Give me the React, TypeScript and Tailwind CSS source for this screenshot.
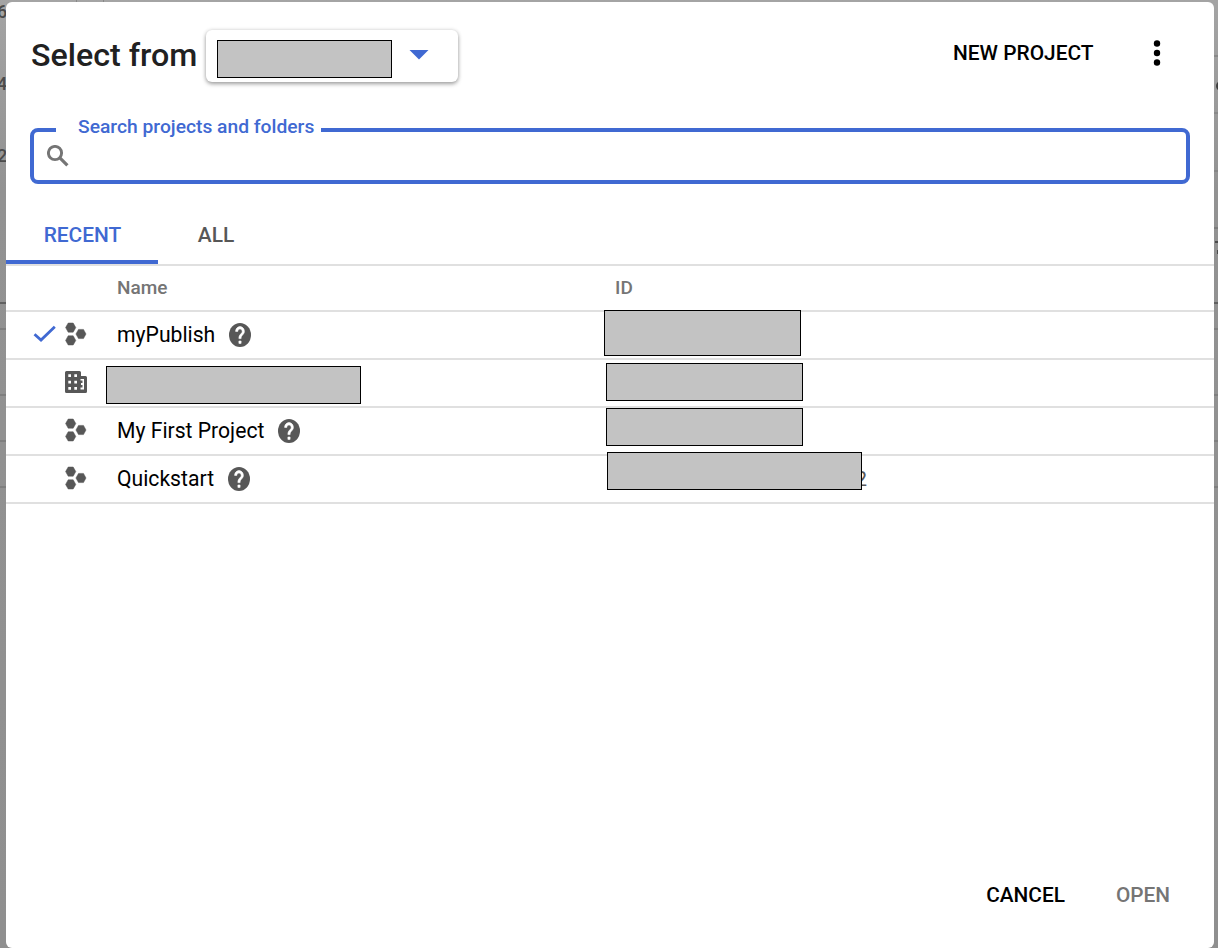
import React from "react";

function ProjectIcon() {
  return (
    <svg width="22" height="24" viewBox="0 0 22 24" fill="#575757" stroke="#575757" strokeWidth=".5" strokeLinejoin="round" className="block shrink-0">
      <path d="M3.200 1h5L10.800 5.600l-2.600 4.600h-5L.6 5.600z" />
      <path d="M13.500 7.400h5l2.500 4.600-2.500 4.600h-5L10.900 12z" />
      <path d="M3.200 13.800h5l2.600 4.600-2.600 4.600h-5L.6 18.400z" />
    </svg>
  );
}

function OrgIcon() {
  return (
    <svg width="22" height="22" viewBox="0 0 22 22" className="block shrink-0">
      <path
        fill="#575757"
        fillRule="evenodd"
        d="M1.500 0h13q1.500 0 1.500 1.500V5h4.500Q22 5 22 6.500v14q0 1.500-1.500 1.500h-19Q0 22 0 20.500v-19Q0 0 1.500 0zM3.300 3.300v2.700h2.700v-2.700zM9.300 3.300v2.700h2.700v-2.700zM3.300 9.700v2.700h2.700v-2.700zM9.300 9.700v2.700h2.700v-2.700zM3.300 16v2.700h2.700v-2.700zM9.300 16v2.700h2.700v-2.700zM15.500 8v1.500H17.500v2.500h-1.500v2H17.500v2.500h-2V18.500H19V8z"
      />
    </svg>
  );
}

function HelpIcon() {
  return (
    <svg width="22" height="24" viewBox="2 2 20 20" preserveAspectRatio="none" className="block shrink-0">
      <circle cx="12" cy="12" r="10" fill="#575757" />
      <path
        fill="#fff"
        stroke="#fff"
        strokeWidth=".5"
        d="M13 19h-2v-2h2v2zm2.070-7.750l-.9.920C13.450 12.900 13 13.500 13 15h-2v-.5c0-1.100.45-2.100 1.170-2.830l1.240-1.260c.37-.36.59-.86.59-1.410 0-1.100-.9-2-2-2s-2 .9-2 2H8c0-2.210 1.790-4 4-4s4 1.790 4 4c0 .88-.36 1.680-.93 2.250z"
      />
    </svg>
  );
}

function CheckIcon() {
  return (
    <svg width="24" height="18" viewBox="0 0 24 18" className="block shrink-0">
      <path d="M1.500 9.200L8 15 21.800 1.800" fill="none" stroke="#4069d2" strokeWidth="2.800" />
    </svg>
  );
}

type Row = {
  name?: string;
  kind: "project" | "org";
  selected?: boolean;
  mask: string;
  tail?: string;
};

const rows: Row[] = [
  { name: "myPublish", kind: "project", selected: true, mask: "-left-[11px] -top-[2px] h-[46px] w-[197px]" },
  { kind: "org", mask: "-left-[9px] top-[3px] h-[38px] w-[197px]" },
  { name: "My First Project", kind: "project", mask: "-left-[9px] top-0 h-[38px] w-[197px]" },
  { name: "Quickstart", kind: "project", mask: "-left-[8px] -top-[4px] h-[38px] w-[255px]", tail: "2" },
];

function ProjectRow({ row }: { row: Row }) {
  return (
    <div className="flex h-12 border-b-2 border-[#e0e0e0]">
      <div className="flex w-[59px] items-center pb-[2px] pl-[27px]">{row.selected && <CheckIcon />}</div>
      <div className="flex w-[52px] items-center pb-[2px]">
        {row.kind === "org" ? <OrgIcon /> : <ProjectIcon />}
      </div>
      <div className="relative flex w-[498px] items-center gap-[14px] text-[21.150px] leading-[30px] text-black">
        {row.name ? (
          <>
            <span>{row.name}</span>
            <HelpIcon />
          </>
        ) : (
          <span className="absolute -left-[11px] top-[6px] h-[38px] w-[255px] border border-black bg-[#c3c3c3]" />
        )}
      </div>
      <div className="relative flex w-[252px] items-center justify-end text-[21px] leading-[30px] text-[#575757]">
        {row.tail}
        <span className={"absolute z-10 border border-black bg-[#c3c3c3] " + row.mask} />
      </div>
    </div>
  );
}

function Backdrop() {
  return (
    <div className="absolute inset-0 overflow-hidden bg-linear-to-b from-[#a4a4a4] via-[#929292] via-20% to-[#8f8f8f] text-[18px] leading-5 font-medium text-[#4b4b4b]">
      <div className="absolute left-[76px] top-0 h-[2px] w-px bg-[#888888]" />
      <div className="absolute left-[103px] top-0 h-[2px] w-px bg-[#888888]" />
      <span className="absolute -left-[3px] top-[2px]">6</span>
      <span className="absolute -left-[3px] top-[74px]">4</span>
      <span className="absolute -left-[3px] top-[146px]">2</span>
      <div className="absolute left-[1214px] top-[55px] h-[2px] w-1 bg-[#898989]" />
      <div className="absolute left-[1214px] top-[112px] h-[2px] w-1 bg-[#898989]" />
      <div className="absolute left-[1214px] top-[170px] h-[2px] w-1 bg-[#858585]" />
      <div className="absolute left-[1214px] top-[227px] h-[2px] w-1 bg-[#7c7c7c]" />
      <div className="absolute left-[1216px] top-[81px] size-[10px] rounded-full bg-[#3e3e3e]" />
      <div className="absolute left-[1215px] top-[241px] h-[2px] w-[3px] bg-[#4b4b4b]" />
      <div className="absolute left-[1217px] top-[250px] h-[4px] w-px bg-[#4b4b4b]" />
      <div className="absolute inset-x-0 top-[302px] h-[2px] bg-[#606060]" />
      <div className="absolute inset-x-0 top-[328px] h-[2px] bg-[#7f7f7f]" />
      <div className="absolute inset-x-0 top-[394px] h-[2px] bg-[#7f7f7f]" />
      <div className="absolute inset-x-0 top-[440px] h-[2px] bg-[#7f7f7f]" />
      <div className="absolute inset-x-0 top-[486px] h-[2px] bg-[#7f7f7f]" />
    </div>
  );
}

export default function App() {
  return (
    <div className="relative h-[948px] w-[1218px] overflow-hidden pl-[6px] pt-[2px] font-[Roboto,sans-serif] whitespace-nowrap">
      <Backdrop />
      <div role="dialog" className="relative flex h-[946px] w-[1208px] flex-col rounded-[6px] bg-white">
        <header className="flex h-[126px] items-start pl-[25px] pt-7">
          <h1 className="w-[175px] pt-1 text-[32.200px] leading-[42px] font-medium text-[#212121]">Select from</h1>
          <button className="flex h-[52px] w-[252px] items-center rounded-[6px] bg-white pl-[11px] shadow-[0_2px_4px_rgba(0,0,0,0.35),0_0_4px_rgba(0,0,0,0.12)]">
            <span className="mt-[6px] h-[38px] w-[175px] border border-black bg-[#c3c3c3]" />
            <svg width="20" height="10" viewBox="0 0 20 10" className="mb-[2px] ml-[17px]">
              <path d="M.5 0h19L10 9.500z" fill="#4069d2" />
            </svg>
          </button>
          <button className="ml-[495px] mt-[8px] text-[20.900px] leading-[30px] font-medium text-black">NEW PROJECT</button>
          <svg width="8" height="28" viewBox="0 0 8 28" className="ml-[59px] mt-[9px]">
            <circle cx="4" cy="4.500" r="3.200" />
            <circle cx="4" cy="14" r="3.200" />
            <circle cx="4" cy="23.500" r="3.200" />
          </svg>
        </header>

        <div className="relative ml-6 flex h-14 w-[1160px] items-center rounded-[8px] border-4 border-[#4069d2] pl-[13px]">
          <label className="absolute -top-[19px] left-[22px] flex h-7 w-[265px] items-center bg-white pl-[22px] text-[19.250px] font-medium text-[#4069d2]">
            Search projects and folders
          </label>
          <svg width="22" height="22" viewBox="0 0 22 22" fill="none" stroke="#757575">
            <circle cx="8" cy="8" r="6.600" strokeWidth="2.900" />
            <path d="M12.600 12.600l7.800 7.800" strokeWidth="3.200" />
          </svg>
        </div>

        <nav className="flex h-[82px] border-b-2 border-[#e0e0e0] pt-7 text-[20.900px] font-medium">
          <button className="flex w-[152px] items-center justify-center border-b-4 border-[#4069d2] pl-px text-[#4069d2]">RECENT</button>
          <button className="flex w-[116px] items-center justify-center pb-1 text-[#575757]">ALL</button>
        </nav>

        <div className="flex h-[46px] items-center border-b-2 border-[#e0e0e0] pl-[111px] text-[19px] font-medium text-[#757575]">
          <span className="w-[498px]">Name</span>
          <span>ID</span>
        </div>
        {rows.map((row, i) => (
          <ProjectRow key={i} row={row} />
        ))}

        <footer className="mt-auto flex h-[105px] items-center justify-end gap-[51px] pr-[44px] text-[20.800px] font-medium">
          <button className="text-black">CANCEL</button>
          <button className="text-[#757575]">OPEN</button>
        </footer>
      </div>
    </div>
  );
}
